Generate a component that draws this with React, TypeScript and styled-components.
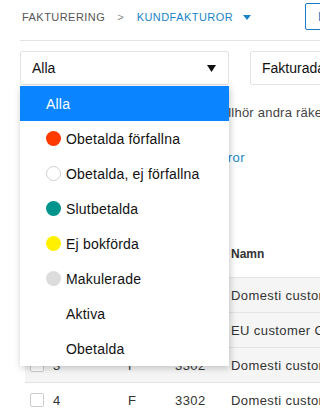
import React from "react";
import styled, { createGlobalStyle } from "styled-components";

const GlobalStyle = createGlobalStyle`
  html, body {
    margin: 0;
    padding: 0;
    background: #ffffff;
    overflow: hidden;
  }
  body {
    font-family: "Liberation Sans", Arial, sans-serif;
    color: #222;
  }
`;

type Status = "red" | "white" | "teal" | "yellow" | "grey" | "none";

const options: { label: string; status: Status }[] = [
  { label: "Alla", status: "none" },
  { label: "Obetalda förfallna", status: "red" },
  { label: "Obetalda, ej förfallna", status: "white" },
  { label: "Slutbetalda", status: "teal" },
  { label: "Ej bokförda", status: "yellow" },
  { label: "Makulerade", status: "grey" },
  { label: "Aktiva", status: "none" },
  { label: "Obetalda", status: "none" },
];

const rows = [
  { nr: "1", type: "F", account: "3302", name: "Domesti customer AB", shaded: true },
  { nr: "2", type: "F", account: "3305", name: "EU customer GmbH", shaded: true },
  { nr: "3", type: "F", account: "3302", name: "Domesti customer AB", shaded: true },
  { nr: "4", type: "F", account: "3302", name: "Domesti customer AB", shaded: false },
];

const dotColors: Record<Status, string> = {
  red: "#ff3a00",
  white: "#ffffff",
  teal: "#00948c",
  yellow: "#fff000",
  grey: "#dcdcdc",
  none: "transparent",
};

export default function App() {
  const selected = "Alla";

  return (
    <Page>
      <GlobalStyle />
      <Header>
        <Breadcrumb>
          <Crumb>Fakturering</Crumb>
          <Separator>&gt;</Separator>
          <Crumb active>Kundfakturor</Crumb>
          <svg width="8" height="5" viewBox="0 0 8 5">
            <path d="M0 0h8L4 5z" fill="#1a84c7" />
          </svg>
        </Breadcrumb>
        <NewButton>Ny faktura</NewButton>
      </Header>

      <Toolbar>
        <SelectWrap>
          <SelectBox>
            <span>{selected}</span>
            <svg width="9" height="7" viewBox="0 0 9 7">
              <path d="M0 0h9L4.5 7z" fill="#111" />
            </svg>
          </SelectBox>
          <Menu>
            {options.map((o) => (
              <MenuItem key={o.label} selected={o.label === selected}>
                {o.label !== "Alla" && (
                  <Dot color={dotColors[o.status]} outlined={o.status === "white"} />
                )}
                {o.label}
              </MenuItem>
            ))}
          </Menu>
        </SelectWrap>
        <DateBox>Fakturadatum</DateBox>
      </Toolbar>

      <Notice>Obs! Det finns även fakturor som tillhör andra räkenskapsår</Notice>
      <Link>Visa tidigare räkenskapsårs fakturor</Link>

      <Table>
        <HeadRow>
          <Cell />
          <HeadCell>Nr</HeadCell>
          <HeadCell>Typ</HeadCell>
          <HeadCell>Kund</HeadCell>
          <HeadCell>Namn</HeadCell>
        </HeadRow>
        {rows.map((r) => (
          <Row key={r.nr} shaded={r.shaded}>
            <Cell>
              <Check />
            </Cell>
            <Cell>{r.nr}</Cell>
            <Cell>{r.type}</Cell>
            <Cell>{r.account}</Cell>
            <Cell>{r.name}</Cell>
          </Row>
        ))}
      </Table>
    </Page>
  );
}

const Page = styled.div`
  width: 100vw;
  height: 100vh;
  overflow: hidden;
  padding-left: 20px;
  box-sizing: border-box;
`;

const Header = styled.div`
  display: flex;
  align-items: center;
  width: 700px;
  height: 41px;
  padding-bottom: 7px;
  box-sizing: border-box;
  border-bottom: 1px solid #e3e3e3;
`;

const Breadcrumb = styled.nav`
  display: flex;
  align-items: center;
  flex-shrink: 0;
  width: 285px;
  padding-left: 2px;
  box-sizing: border-box;

  svg {
    margin-left: 10px;
    margin-top: 1px;
  }
`;

const Crumb = styled.span<{ active?: boolean }>`
  font-size: 11px;
  text-transform: uppercase;
  letter-spacing: 0.45px;
  color: ${({ active }) => (active ? "#1a84c7" : "#555")};
`;

const Separator = styled.span`
  font-size: 11px;
  color: #888;
  margin: 0 13px 0 12px;
`;

const NewButton = styled.button`
  flex-shrink: 0;
  height: 27px;
  padding: 0 12px;
  border: 1px solid #1a78c2;
  border-radius: 2px;
  background: #fff;
  color: #1a78c2;
  font-family: inherit;
  font-size: 13px;
`;

const Toolbar = styled.div`
  display: flex;
  gap: 21px;
  width: 700px;
  margin-top: 10px;
`;

const SelectWrap = styled.div`
  position: relative;
  flex-shrink: 0;
  width: 209px;
`;

const SelectBox = styled.div`
  display: flex;
  align-items: center;
  justify-content: space-between;
  height: 34px;
  padding: 0 12px 0 11px;
  box-sizing: border-box;
  border: 1px solid #e3e3e3;
  border-radius: 2px;
  font-size: 14px;
  color: #111;
`;

const Menu = styled.ul`
  position: absolute;
  top: 35px;
  left: 0;
  width: 209px;
  margin: 0;
  padding: 0;
  list-style: none;
  background: #fff;
  box-shadow: 1px 2px 7px rgba(0, 0, 0, 0.22);
  z-index: 10;
`;

const MenuItem = styled.li<{ selected?: boolean }>`
  display: flex;
  align-items: center;
  gap: 5px;
  height: 35px;
  padding-left: ${({ selected }) => (selected ? "26px" : "46px")};
  font-size: 14px;
  letter-spacing: 0.2px;
  color: ${({ selected }) => (selected ? "#fff" : "#111")};
  background: ${({ selected }) => (selected ? "#0b84ff" : "#fff")};
`;

const Dot = styled.span<{ color: string; outlined?: boolean }>`
  width: 15px;
  height: 15px;
  margin-left: -20px;
  border-radius: 50%;
  box-sizing: border-box;
  background: ${({ color }) => color};
  border: ${({ outlined }) => (outlined ? "1px solid #cfcfcf" : "none")};
`;

const DateBox = styled.div`
  display: flex;
  align-items: center;
  flex-shrink: 0;
  width: 200px;
  height: 34px;
  padding-left: 11px;
  box-sizing: border-box;
  border: 1px solid #e3e3e3;
  border-radius: 2px;
  font-size: 14px;
  color: #111;
`;

const Notice = styled.p`
  margin: 20px 0 0;
  font-size: 13px;
  letter-spacing: 0.23px;
  color: #444;
  white-space: nowrap;
`;

const Link = styled.a`
  display: block;
  margin-top: 30px;
  font-size: 13px;
  letter-spacing: 0.5px;
  color: #1a84c7;
  white-space: nowrap;
`;

const Table = styled.div`
  display: grid;
  grid-template-columns: 23px 75px 47px 56px 1fr;
  width: 600px;
  margin: 66px 0 0 5px;
`;

const HeadRow = styled.div`
  display: contents;

  & > * {
    height: 46px;
  }
`;

const HeadCell = styled.div`
  display: flex;
  align-items: center;
  padding-left: 5px;
  font-size: 12px;
  font-weight: 700;
  color: #333;
`;

const Row = styled.div<{ shaded?: boolean }>`
  display: contents;

  & > * {
    height: 35px;
    border-top: 1px solid #e3e3e3;
    background: ${({ shaded }) => (shaded ? "#f5f5f5" : "#fff")};
  }
`;

const Cell = styled.div`
  display: flex;
  align-items: center;
  padding-left: 5px;
  box-sizing: border-box;
  font-size: 13px;
  letter-spacing: 0.4px;
  color: #333;
  white-space: nowrap;
  overflow: hidden;
`;

const Check = styled.span`
  width: 14px;
  height: 14px;
  box-sizing: border-box;
  border: 1px solid #cdcdcd;
  border-radius: 2px;
  background: #fff;
`;
